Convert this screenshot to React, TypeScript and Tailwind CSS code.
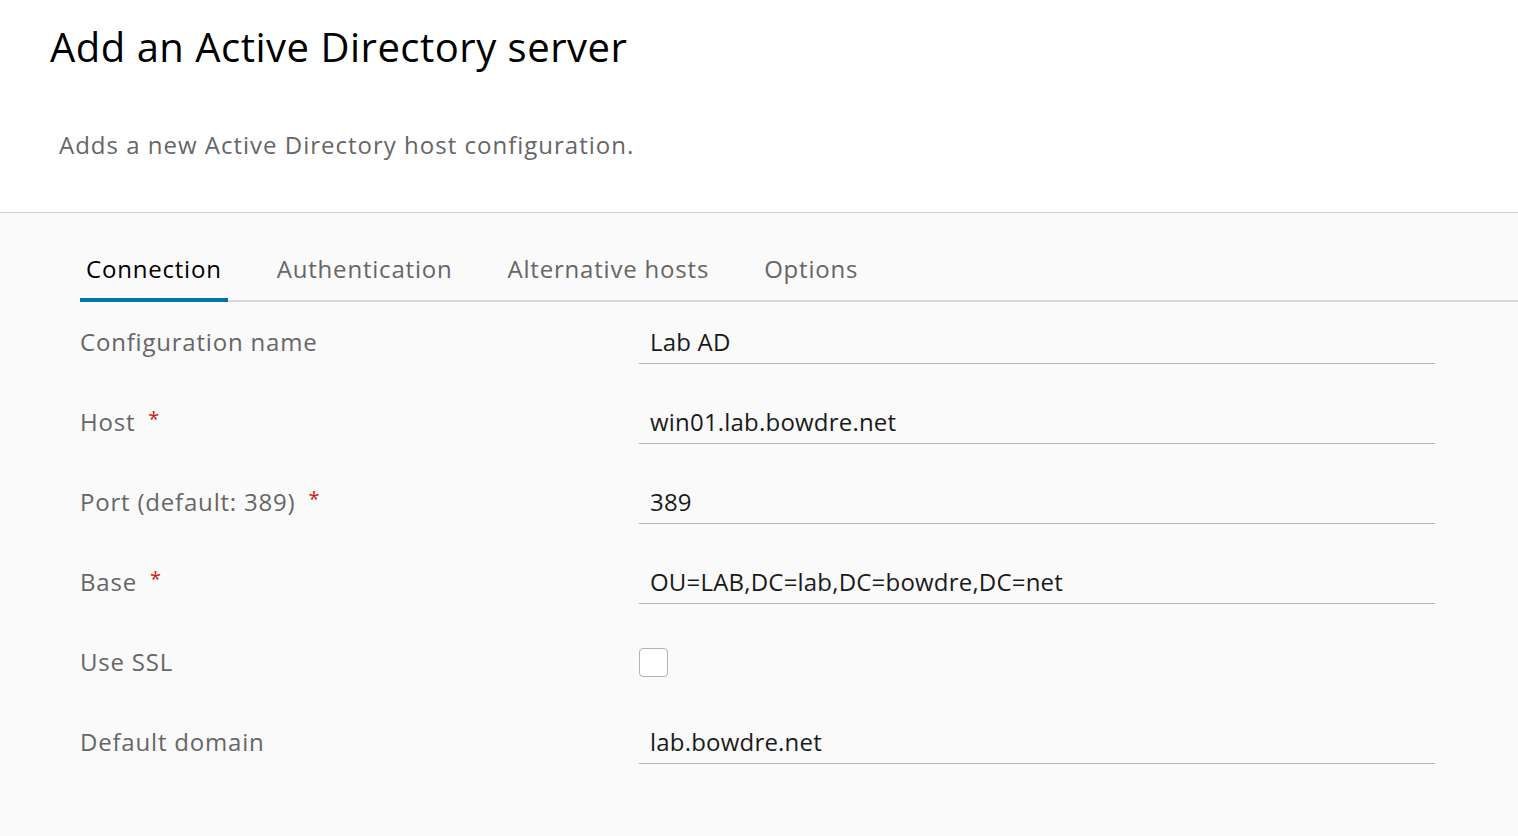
import React from "react";

type Field = {
  label: string;
  required?: boolean;
  value?: string;
  checkbox?: boolean;
};

const tabs = ["Connection", "Authentication", "Alternative hosts", "Options"];

const fields: Field[] = [
  { label: "Configuration name", value: "Lab AD" },
  { label: "Host", required: true, value: "win01.lab.bowdre.net" },
  { label: "Port (default: 389)", required: true, value: "389" },
  { label: "Base", required: true, value: "OU=LAB,DC=lab,DC=bowdre,DC=net" },
  { label: "Use SSL", checkbox: true },
  { label: "Default domain", value: "lab.bowdre.net" },
];

function Row({ field }: { field: Field }) {
  return (
    <div className="flex h-[80px] items-center">
      <div className="w-[559px] text-[24px] tracking-[0.8px] text-[#666666]">
        {field.label}
        {field.required && (
          <span className="ml-[13px] align-[5px] text-[20px] text-[#c92100]">*</span>
        )}
      </div>
      {field.checkbox ? (
        <div className="h-[29px] w-[29px] rounded-[4px] border border-[#b3b3b3] bg-white" />
      ) : (
        <div className="flex h-[44px] w-[796px] items-center border-b border-[#b3b3b3] pl-[11px] text-[24px] tracking-[0.2px] text-[#1a1a1a]">
          {field.value}
        </div>
      )}
    </div>
  );
}

export default function App() {
  const active = "Connection";

  return (
    <div
      className="flex min-h-screen flex-col bg-[#fafafa]"
      style={{ fontFamily: '"Open Sans", "Noto Sans", sans-serif' }}
    >
      <div className="h-[213px] border-b border-[#cccccc] bg-white">
        <h1 className="pl-[50px] pt-[21px] text-[40px] leading-[52px] tracking-[0.5px] text-black">
          Add an Active Directory server
        </h1>
        <p className="pl-[59px] pt-[56px] text-[24px] leading-[32px] tracking-[1px] text-[#666666]">
          Adds a new Active Directory host configuration.
        </p>
      </div>

      <div className="pl-[80px]">
        <div className="mt-[39px] flex gap-[43px] border-b-2 border-[#d7d7d7]">
          {tabs.map((t) => (
            <div
              key={t}
              className={`-mb-[2px] px-[6px] pb-[12px] text-[24px] leading-[34px] tracking-[0.8px] ${
                t === active
                  ? "border-b-4 border-[#0072a3] text-black"
                  : "border-b-4 border-transparent text-[#666666]"
              }`}
            >
              {t}
            </div>
          ))}
        </div>

        <div className="flex flex-col">
          {fields.map((f) => (
            <Row key={f.label} field={f} />
          ))}
        </div>
      </div>
    </div>
  );
}
